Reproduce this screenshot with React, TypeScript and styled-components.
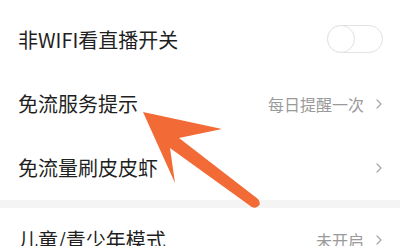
import React from "react";
import styled, { createGlobalStyle } from "styled-components";

const Global = createGlobalStyle`
  html, body { margin: 0; padding: 0; background: #fff; overflow: hidden; }
  body { font-family: "Noto Sans CJK SC", "Noto Sans", sans-serif; }
`;

const Page = styled.div`
  position: relative;
  width: 400px;
  height: 246px;
  overflow: hidden;
  background: #fff;
  padding-top: 8px;
  box-sizing: border-box;
`;

const Group = styled.div`
  display: flex;
  flex-direction: column;
  background: #fff;
`;

const Band = styled.div`
  height: 8px;
  background: #f4f4f4;
`;

const Row = styled.div`
  height: 64px;
  display: flex;
  align-items: center;
  justify-content: space-between;
  padding: 0 18px 0 18px;
  box-sizing: border-box;
`;

const Label = styled.span`
  font-size: 20px;
  color: #1f1f1f;
  line-height: 1;
  letter-spacing: 0;
`;

const Right = styled.div`
  display: flex;
  align-items: center;
  gap: 12px;
`;

const Value = styled.span`
  font-size: 16px;
  color: #9a9a9a;
  line-height: 1;
`;

const Toggle = styled.div`
  position: relative;
  width: 56px;
  height: 28px;
  border: 1.5px solid #e2e2e2;
  border-radius: 14px;
  box-sizing: border-box;
  background: #fff;
  margin-right: -1px;
  margin-top: -2px;
`;

const Knob = styled.div`
  position: absolute;
  left: -1.5px;
  top: -1.5px;
  width: 28px;
  height: 28px;
  border: 1.5px solid #e2e2e2;
  border-radius: 50%;
  box-sizing: border-box;
  background: #fff;
`;

const Overlay = styled.svg`
  position: absolute;
  left: 0;
  top: 0;
  pointer-events: none;
`;

const Chevron = () => (
  <svg width="6" height="10" viewBox="0 0 6 10">
    <polyline points="1,1 5,5 1,9" fill="none" stroke="#aaa" strokeWidth="1.3" strokeLinecap="round" strokeLinejoin="round" />
  </svg>
);

export default function App() {
  return (
    <>
      <Global />
      <Page>
        <Group>
          <Row>
            <Label>非WIFI看直播开关</Label>
            <Toggle>
              <Knob />
            </Toggle>
          </Row>
          <Row>
            <Label>免流服务提示</Label>
            <Right>
              <Value>每日提醒一次</Value>
              <Chevron />
            </Right>
          </Row>
          <Row>
            <Label>免流量刷皮皮虾</Label>
            <Right>
              <Chevron />
            </Right>
          </Row>
        </Group>
        <Band />
        <Group>
          <Row>
            <Label>儿童/青少年模式</Label>
            <Right>
              <Value>未开启</Value>
              <Chevron />
            </Right>
          </Row>
        </Group>
        <Overlay width="400" height="246" viewBox="0 0 400 246">
          <path
            d="M143 112 L222 129 L179 138 L258 199 Q262 204 257 207 Q253 209 249 205 L170 148 L175 183 Z"
            fill="#f26a35"
            strokeLinejoin="round"
          />
        </Overlay>
      </Page>
    </>
  );
}
